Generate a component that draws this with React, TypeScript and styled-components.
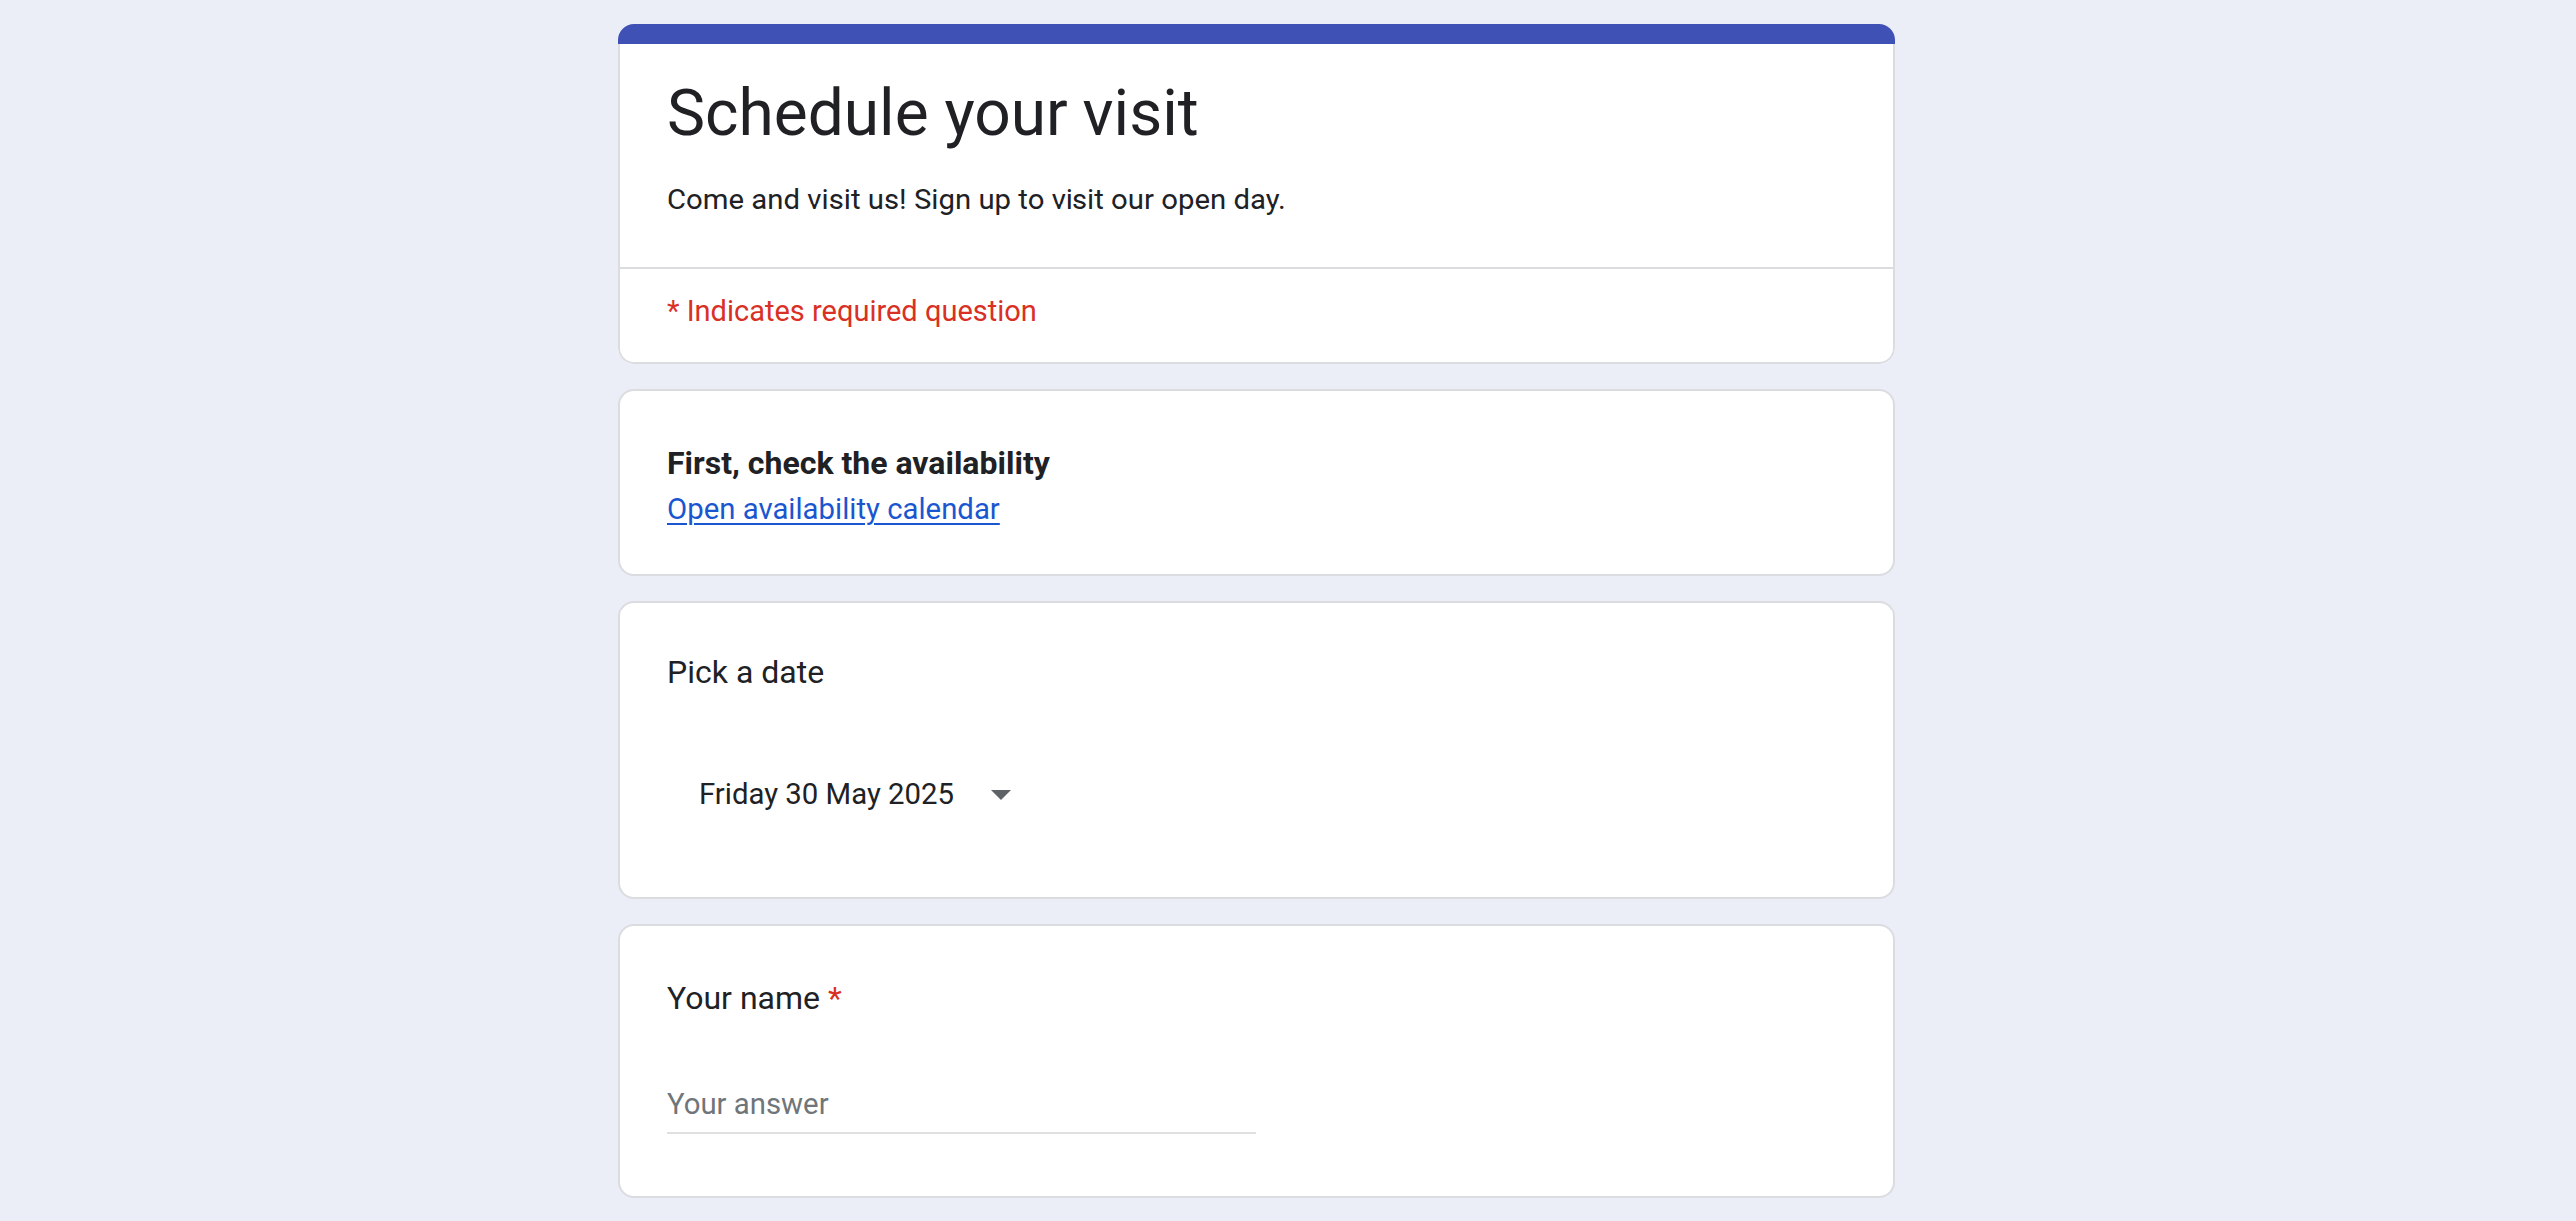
import React from 'react'
import styled, { createGlobalStyle } from 'styled-components'

const GlobalStyle = createGlobalStyle`
  html, body {
    margin: 0;
    overflow: hidden;
  }
  body {
    background: #ebedf7;
    font-family: Roboto, "Liberation Sans", Arial, sans-serif;
    color: #202124;
  }
`

const Page = styled.div`
  display: flex;
  flex-direction: column;
  align-items: center;
  padding: 24px 64px 0 0;
`

const Column = styled.div`
  width: 1280px;
  display: flex;
  flex-direction: column;
  gap: 25px;
`

const HeaderCard = styled.div`
  border-radius: 16px;
  overflow: hidden;
  background: #fff;
`

const AccentBar = styled.div`
  height: 20px;
  background: #4051b5;
`

const HeaderBody = styled.div`
  border: 2px solid #dadce0;
  border-top: none;
  border-radius: 0 0 16px 16px;
`

const TitleSection = styled.div`
  padding: 30px 48px 48px;
  border-bottom: 2px solid #dadce0;
`

const FormTitle = styled.h1`
  margin: 0;
  font-size: 64px;
  line-height: 80px;
  font-weight: 400;
  color: #202124;
`

const Description = styled.p`
  margin: 26px 0 0;
  font-size: 29.33px;
  line-height: 40px;
  color: #202124;
`

const RequiredNote = styled.div`
  padding: 22px 48px 31px;
  font-size: 29px;
  line-height: 40px;
  color: #d93025;
`

const Card = styled.div<{ $pad: string }>`
  background: #fff;
  border: 2px solid #dadce0;
  border-radius: 16px;
  padding: ${({ $pad }) => $pad};
`

const SectionTitle = styled.div`
  font-size: 32px;
  line-height: 44px;
  font-weight: 700;
  color: #202124;
`

const CalendarLink = styled.a`
  display: block;
  margin-top: 4px;
  font-size: 29.33px;
  line-height: 40px;
  color: #1a56d0;
  text-decoration: underline;
  text-decoration-thickness: 2px;
  text-underline-offset: 4px;
`

const QuestionTitle = styled.div`
  font-size: 32px;
  line-height: 44px;
  font-weight: 400;
  color: #202124;
`

const Star = styled.span`
  color: #d93025;
`

const Dropdown = styled.div`
  margin-top: 48px;
  height: 104px;
  display: flex;
  align-items: center;
  padding-left: 32px;
  font-size: 29.33px;
  line-height: 40px;
  color: #202124;

  svg {
    margin-left: 23px;
    flex-shrink: 0;
  }
`

const AnswerField = styled.div`
  margin: 65px 0 14px;
  width: 50%;
  padding-bottom: 8px;
  border-bottom: 2px solid #e0e0e0;
  font-size: 29.33px;
  line-height: 40px;
  color: #70757a;
`

const ArrowDown = () => (
  <svg width="48" height="48" viewBox="0 0 24 24">
    <path d="M7 10l5 5 5-5z" fill="#5f6368" />
  </svg>
)

const App = () => {
  return (
    <>
      <GlobalStyle />
      <Page>
        <Column>
          <HeaderCard>
            <AccentBar />
            <HeaderBody>
              <TitleSection>
                <FormTitle>Schedule your visit</FormTitle>
                <Description>Come and visit us! Sign up to visit our open day.</Description>
              </TitleSection>
              <RequiredNote>* Indicates required question</RequiredNote>
            </HeaderBody>
          </HeaderCard>

          <Card $pad="50px 48px 45px">
            <SectionTitle>First, check the availability</SectionTitle>
            <CalendarLink href="#">Open availability calendar</CalendarLink>
          </Card>

          <Card $pad="48px 48px 51px">
            <QuestionTitle>Pick a date</QuestionTitle>
            <Dropdown>
              <span>Friday 30 May 2025</span>
              <ArrowDown />
            </Dropdown>
          </Card>

          <Card $pad="50px 48px 48px">
            <QuestionTitle>
              Your name <Star>*</Star>
            </QuestionTitle>
            <AnswerField>Your answer</AnswerField>
          </Card>
        </Column>
      </Page>
    </>
  )
}

export default App
